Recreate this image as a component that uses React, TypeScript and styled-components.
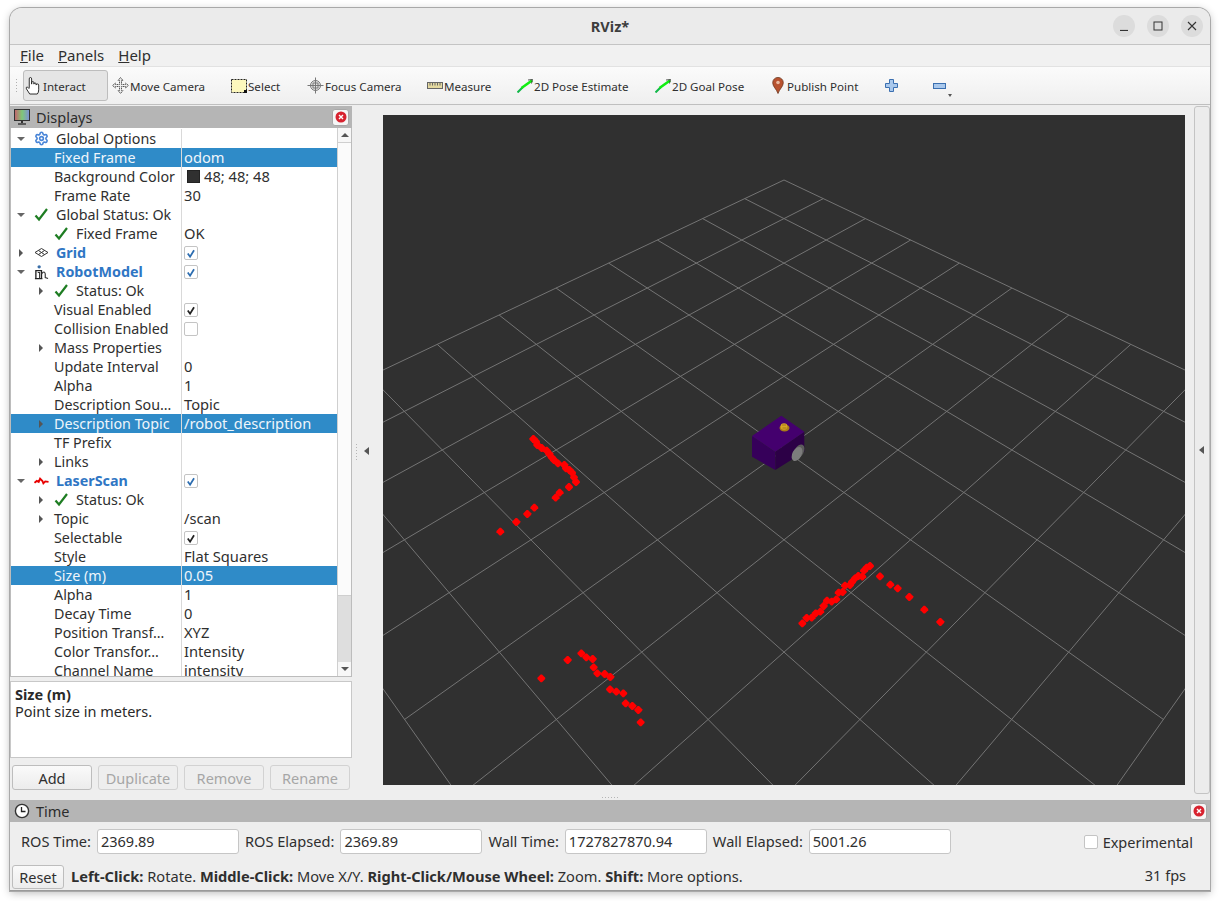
import React from 'react';
import styled, { createGlobalStyle } from 'styled-components';
import { Settings } from 'lucide-react';

const GlobalStyle = createGlobalStyle`
  html, body { margin: 0; padding: 0; background: #fff; }
  body {
    width: 1220px;
    height: 901px;
    overflow: hidden;
    font-family: 'Noto Sans', 'Open Sans', sans-serif;
    font-size: 14.5px;
    color: #2f2f2f;
  }
  * { box-sizing: border-box; }
`;

// ------------------------------------------------------------------------------------------------
// data

type RowData = {
  name: string;
  value?: string;
  level?: 0 | 1;
  arrow?: 'open' | 'closed';
  icon?: React.ReactNode;
  bold?: boolean;
  selected?: boolean;
  check?: 'blue' | 'black' | 'empty';
  swatch?: boolean;
};

const Check = () => (
  <svg width="15" height="15" viewBox="0 0 15 15">
    <path d="M1.5 8.5 L5 12.5 L13 2" fill="none" stroke="#1e7d22" strokeWidth="2.2" />
  </svg>
);

const GridIcon = () => (
  <svg width="15" height="15" viewBox="0 0 15 15" fill="none" stroke="#333" strokeWidth="1">
    <path d="M7.5 3.5 L14 7.5 L7.5 11.5 L1 7.5 Z" />
    <path d="M4.5 5.5 L10.5 9.5 M10.5 5.5 L4.5 9.5" />
  </svg>
);

const RobotIcon = () => (
  <svg width="16" height="16" viewBox="0 0 16 16" fill="none">
    <circle cx="5.5" cy="2.5" r="1.8" fill="#3a6ea8" />
    <path d="M2 15 V6.5 H8 V15 M1 15 H9" stroke="#222" strokeWidth="1.4" />
    <path d="M4 8.5 H6 V15 M8 10 Q11 6 12 10 L12 14 L15 15" stroke="#333" strokeWidth="1.2" />
  </svg>
);

const LaserIcon = () => (
  <svg width="16" height="15" viewBox="0 0 16 15" fill="none">
    <path d="M0.5 10 L3 8 L5 9 L6.5 5.5 L9 8 L10 10.5 L12 8.5 L15.5 9" stroke="#e80000" strokeWidth="2" />
  </svg>
);

const rows: RowData[] = [
  { name: 'Global Options', arrow: 'open', icon: <Settings size={15} color="#4a86d8" strokeWidth={2.6} /> },
  { name: 'Fixed Frame', value: 'odom', level: 1, selected: true },
  { name: 'Background Color', value: '48; 48; 48', level: 1, swatch: true },
  { name: 'Frame Rate', value: '30', level: 1 },
  { name: 'Global Status: Ok', arrow: 'open', icon: <Check /> },
  { name: 'Fixed Frame', value: 'OK', level: 1, icon: <Check /> },
  { name: 'Grid', arrow: 'closed', icon: <GridIcon />, bold: true, check: 'blue' },
  { name: 'RobotModel', arrow: 'open', icon: <RobotIcon />, bold: true, check: 'blue' },
  { name: 'Status: Ok', level: 1, arrow: 'closed', icon: <Check /> },
  { name: 'Visual Enabled', level: 1, check: 'black' },
  { name: 'Collision Enabled', level: 1, check: 'empty' },
  { name: 'Mass Properties', level: 1, arrow: 'closed' },
  { name: 'Update Interval', value: '0', level: 1 },
  { name: 'Alpha', value: '1', level: 1 },
  { name: 'Description Sou…', value: 'Topic', level: 1 },
  { name: 'Description Topic', value: '/robot_description', level: 1, arrow: 'closed', selected: true },
  { name: 'TF Prefix', level: 1 },
  { name: 'Links', level: 1, arrow: 'closed' },
  { name: 'LaserScan', arrow: 'open', icon: <LaserIcon />, bold: true, check: 'blue' },
  { name: 'Status: Ok', level: 1, arrow: 'closed', icon: <Check /> },
  { name: 'Topic', value: '/scan', level: 1, arrow: 'closed' },
  { name: 'Selectable', level: 1, check: 'black' },
  { name: 'Style', value: 'Flat Squares', level: 1 },
  { name: 'Size (m)', value: '0.05', level: 1, selected: true },
  { name: 'Alpha', value: '1', level: 1 },
  { name: 'Decay Time', value: '0', level: 1 },
  { name: 'Position Transf…', value: 'XYZ', level: 1 },
  { name: 'Color Transfor…', value: 'Intensity', level: 1 },
  { name: 'Channel Name', value: 'intensity', level: 1 },
];

const HandIcon = () => (
  <svg width="18" height="20" viewBox="0 0 18 20" fill="#fff" stroke="#222" strokeWidth="1">
    <path d="M4.5 12 V2.5 Q4.5 1 5.7 1 Q7 1 7 2.5 V8 V6.5 Q7 5.3 8.2 5.3 Q9.4 5.3 9.4 6.5 V8 Q9.4 6.8 10.6 6.8 Q11.8 6.8 11.8 8 V9 Q11.8 7.8 13 7.8 Q14.5 7.8 14.5 9 V14 Q14.5 17 13 18.5 H5 L1.5 13 Q0.8 11 2.5 11 L4.5 13" />
  </svg>
);

const MoveIcon = () => (
  <svg width="17" height="17" viewBox="0 0 17 17" fill="#eee" stroke="#555" strokeWidth="1">
    <path d="M8.5 0.5 L11 3.5 H9.5 V7.5 H13.5 V6 L16.5 8.5 L13.5 11 V9.5 H9.5 V13.5 H11 L8.5 16.5 L6 13.5 H7.5 V9.5 H3.5 V11 L0.5 8.5 L3.5 6 V7.5 H7.5 V3.5 H6 Z" strokeDasharray="1.5 0.6" />
  </svg>
);

const SelectIcon = () => (
  <svg width="16" height="14" viewBox="0 0 16 14">
    <rect x="0.5" y="0.5" width="15" height="13" fill="#fdf8bd" stroke="#222" strokeDasharray="2 1" />
    <rect x="13" y="11" width="3" height="3" fill="#111" />
  </svg>
);

const FocusIcon = () => (
  <svg width="17" height="17" viewBox="0 0 17 17" fill="none" stroke="#777" strokeWidth="1">
    <circle cx="8.5" cy="8.5" r="5" fill="#e6e6e6" />
    <path d="M8.5 0.5 V16.5 M0.5 8.5 H16.5 M6 6 H11 V11 H6 Z" />
  </svg>
);

const MeasureIcon = () => (
  <svg width="16" height="7" viewBox="0 0 16 7">
    <rect x="0.5" y="0.5" width="15" height="6" fill="#e4d9a0" stroke="#666" />
    <path d="M3 1 V3.5 M5.5 1 V3.5 M8 1 V3.5 M10.5 1 V3.5 M13 1 V3.5" stroke="#666" />
  </svg>
);

const PoseIcon = () => (
  <svg width="16" height="14" viewBox="0 0 16 14" fill="none">
    <path d="M0.5 13.5 L6 8" stroke="#12b84a" strokeWidth="2" />
    <path d="M4.5 9 L15 1.5" stroke="#12ee12" strokeWidth="2.6" />
    <path d="M11 1 L15.5 0.5 L14.5 4.5" stroke="#111" strokeWidth="0.7" />
  </svg>
);

const PinIcon = () => (
  <svg width="12" height="17" viewBox="0 0 12 17">
    <path d="M6 16.5 C4.5 12 0.7 9.5 0.7 5.7 A5.3 5.3 0 0 1 11.3 5.7 C11.3 9.5 7.5 12 6 16.5 Z" fill="#b8522f" stroke="#6e3a22" strokeWidth="0.8" />
    <circle cx="6" cy="5.5" r="1.8" fill="#e9b9a0" />
  </svg>
);

const PlusIcon = () => (
  <svg width="13" height="13" viewBox="0 0 13 13">
    <path d="M4.5 0.5 H8.5 V4.5 H12.5 V8.5 H8.5 V12.5 H4.5 V8.5 H0.5 V4.5 H4.5 Z" fill="#a9c8ec" stroke="#3b6fb0" />
  </svg>
);

const MinusIcon = () => (
  <svg width="13" height="6" viewBox="0 0 13 6">
    <rect x="0.5" y="0.5" width="12" height="5" fill="#a9c8ec" stroke="#3b6fb0" />
  </svg>
);

const MonitorIcon = () => (
  <svg width="16" height="16" viewBox="0 0 16 16">
    <defs>
      <linearGradient id="screen" x1="0" x2="1" y1="0" y2="0">
        <stop offset="0" stopColor="#c8606c" />
        <stop offset="0.5" stopColor="#7fc878" />
        <stop offset="1" stopColor="#7e8fd8" />
      </linearGradient>
    </defs>
    <rect x="0.5" y="0.5" width="15" height="11" fill="url(#screen)" stroke="#333" />
    <path d="M8 12 V14" stroke="#333" strokeWidth="2" />
    <path d="M4 15 H12" stroke="#333" strokeWidth="1.4" />
  </svg>
);

const ClockIcon = () => (
  <svg width="16" height="16" viewBox="0 0 16 16">
    <circle cx="8" cy="8" r="6.6" fill="#fff" stroke="#333" strokeWidth="1.4" />
    <path d="M7.5 4 V8.5 H11.5" fill="none" stroke="#222" strokeWidth="1.3" />
  </svg>
);

type Tool = { label?: string; width: number; icon: React.ReactNode; active?: boolean };

const tools: Tool[] = [
  { label: 'Interact', width: 85, icon: <HandIcon />, active: true },
  { label: 'Move Camera', width: 118, icon: <MoveIcon /> },
  { label: 'Select', width: 77, icon: <SelectIcon /> },
  { label: 'Focus Camera', width: 119, icon: <FocusIcon /> },
  { label: 'Measure', width: 90, icon: <MeasureIcon /> },
  { label: '2D Pose Estimate', width: 138, icon: <PoseIcon /> },
  { label: '2D Goal Pose', width: 115, icon: <PoseIcon /> },
  { label: 'Publish Point', width: 114, icon: <PinIcon /> },
  { width: 48, icon: <PlusIcon /> },
  { width: 19, icon: <MinusIcon /> },
];

// ------------------------------------------------------------------------------------------------
// 3d view, points read off the picture

const project = (a: number, b: number): [number, number] => {
  const w = 1 - 0.03328 * (a + b);
  return [784 + (38 * (a - b)) / w, (180 + 12.02 * (a + b)) / w];
};

const gridLines = Array.from({ length: 11 }, (_, i) => [
  [project(i, 0), project(i, 10)],
  [project(0, i), project(10, i)],
]).flat();

const scan = (ox: number, oy: number, pts: number[][]) => pts.map(([x, y]) => [ox + x / 3, oy + y / 3]);

const scanPoints = [
  ...scan(480, 420, [
    [160, 57], [168, 65], [172, 75], [185, 84], [200, 92], [208, 102], [215, 112], [222, 120], [234, 130], [253, 135],
    [258, 145], [268, 150], [276, 158], [282, 172], [288, 186], [267, 201], [239, 218], [227, 233], [163, 263],
    [142, 282], [109, 306], [61, 335],
  ]),
  ...scan(520, 640, [
    [184, 40], [199, 52], [218, 57], [143, 60], [221, 82], [232, 100], [254, 102], [271, 111], [64, 115], [270, 148],
    [289, 155], [310, 160], [317, 190], [337, 198], [355, 210], [362, 247],
  ]),
  ...scan(780, 550, [
    [67, 220], [80, 204], [95, 203], [107, 190], [121, 185], [131, 168], [141, 152], [155, 155], [169, 148], [176, 128],
    [188, 126], [195, 107], [210, 105], [216, 96], [225, 85], [235, 78], [247, 80], [252, 62], [260, 53], [270, 48],
    [300, 79], [331, 104], [353, 115], [388, 141], [433, 179], [481, 216],
  ]),
];

const dotPath = (x: number, y: number) =>
  `M${x - 0.7} ${y - 3.9} H${x + 0.7} L${x + 3.9} ${y - 0.7} V${y + 0.7} L${x + 0.7} ${y + 3.9} H${x - 0.7} L${x - 3.9} ${y + 0.7} V${y - 0.7} Z`;

const Scene = () => (
  <SceneSvg viewBox="383 115 802 670">
    {gridLines.map(([p, q], i) => (
      <line key={i} x1={p[0]} y1={p[1]} x2={q[0]} y2={q[1]} stroke="#747474" strokeWidth="1" />
    ))}
    {scanPoints.map(([x, y], i) => (
      <path key={i} d={dotPath(x, y)} fill="#ff0000" />
    ))}
    <g>
      <polygon points="752,436 775.3,451.7 775.3,470 752,456.7" fill="#36005a" />
      <polygon points="775.3,451.7 804.3,431.7 804.3,451.7 775.3,470" fill="#2c0046" />
      <polygon points="781.3,415.7 804.3,431.7 775.3,451.7 752,436" fill="#44006e" />
      <ellipse cx="784.5" cy="428" rx="5" ry="3.4" fill="#a97d16" />
      <ellipse cx="784" cy="426.5" rx="3.4" ry="3.2" fill="#d6a426" />
      <path d="M782 425 H786 M782.5 428 H786.5" stroke="#8f6a12" strokeWidth="0.7" />
      <ellipse cx="799" cy="451.5" rx="4.6" ry="7.6" transform="rotate(28 799 451.5)" fill="#5c5c5c" />
      <ellipse cx="797" cy="454" rx="4.6" ry="7.6" transform="rotate(28 797 454)" fill="#7c7c7c" />
    </g>
  </SceneSvg>
);

// ------------------------------------------------------------------------------------------------

const CloseButton = () => (
  <CloseBox>
    <svg width="12" height="12" viewBox="0 0 12 12">
      <circle cx="6" cy="6" r="5.5" fill="#d8222f" />
      <path d="M4 4 L8 8 M8 4 L4 8" stroke="#fff" strokeWidth="1.4" />
    </svg>
  </CloseBox>
);

const Caret: React.FC<{ open: boolean }> = ({ open }) => (
  <svg width="10" height="10" viewBox="0 0 10 10">
    {open ? <path d="M1 3 H9 L5 7 Z" fill="#666" /> : <path d="M3 1 L7 5 L3 9 Z" fill="#555" />}
  </svg>
);

const CheckBox: React.FC<{ state: 'blue' | 'black' | 'empty' }> = ({ state }) => (
  <CheckFrame>
    {state !== 'empty' && (
      <svg width="13" height="13" viewBox="0 0 13 13">
        <path d="M3 6.5 L5.5 10 L9.8 3" fill="none" stroke={state === 'blue' ? '#2b6cb0' : '#222'} strokeWidth="1.9" />
      </svg>
    )}
  </CheckFrame>
);

const TreeRow: React.FC<{ row: RowData }> = ({ row }) => (
  <Row $selected={row.selected}>
    <NameCell $level={row.level ?? 0}>
      <CaretSlot>{row.arrow && <Caret open={row.arrow === 'open'} />}</CaretSlot>
      {row.icon && <IconSlot>{row.icon}</IconSlot>}
      <NameText $bold={row.bold} $hasIcon={!!row.icon}>
        {row.name}
      </NameText>
    </NameCell>
    <ValueCell>
      {row.swatch && <Swatch />}
      {row.check && <CheckBox state={row.check} />}
      {row.value}
    </ValueCell>
  </Row>
);

export default function App() {
  return (
    <>
      <GlobalStyle />
      <Window>
        <TitleBar>
          <Title>RViz*</Title>
          <WindowButtons>
            <WindowButton>
              <svg width="10" height="10" viewBox="0 0 10 10"><path d="M1 9.5 H9" stroke="#333" strokeWidth="1.2" /></svg>
            </WindowButton>
            <WindowButton>
              <svg width="10" height="10" viewBox="0 0 10 10"><rect x="1" y="1" width="8" height="8" fill="none" stroke="#333" /></svg>
            </WindowButton>
            <WindowButton>
              <svg width="10" height="10" viewBox="0 0 10 10"><path d="M1 1 L9 9 M9 1 L1 9" stroke="#333" strokeWidth="1.1" /></svg>
            </WindowButton>
          </WindowButtons>
        </TitleBar>

        <MenuBar>
          <MenuItem><u>F</u>ile</MenuItem>
          <MenuItem><u>P</u>anels</MenuItem>
          <MenuItem><u>H</u>elp</MenuItem>
        </MenuBar>

        <ToolBar>
          <ToolHandle />
          {tools.map((tool, i) => (
            <ToolButton key={i} $width={tool.width} $active={tool.active}>
              <ToolIcon>{tool.icon}</ToolIcon>
              <ToolLabel>{tool.label}</ToolLabel>
            </ToolButton>
          ))}
          <MenuCaret />
        </ToolBar>

        <Middle>
          <LeftDock>
            <DockHeader>
              <MonitorIcon />
              <span>Displays</span>
              <CloseButton />
            </DockHeader>
            <TreeFrame>
              <Tree>
                {rows.map((row, i) => (
                  <TreeRow key={i} row={row} />
                ))}
              </Tree>
              <ScrollBar>
                <ScrollButton><ScrollUp /></ScrollButton>
                <ScrollThumb />
                <ScrollTrack />
                <ScrollButton><ScrollDown /></ScrollButton>
              </ScrollBar>
            </TreeFrame>
            <HSplit />
            <Description>
              <b>Size (m)</b>
              <div>Point size in meters.</div>
            </Description>
            <DockButtons>
              <PushButton>Add</PushButton>
              <PushButton disabled>Duplicate</PushButton>
              <PushButton disabled>Remove</PushButton>
              <PushButton disabled>Rename</PushButton>
            </DockButtons>
          </LeftDock>

          <LeftHandle>
            <GripDots />
            <HandleArrow />
          </LeftHandle>

          <ViewColumn>
            <Scene />
          </ViewColumn>

          <RightHandle>
            <HandleArrow />
          </RightHandle>
        </Middle>

        <BottomSplit>
          <GripDotsRow />
        </BottomSplit>

        <TimePanel>
          <TimeHeader>
            <ClockIcon />
            <span>Time</span>
            <CloseButton />
          </TimeHeader>
          <TimeRow>
            <TimeLabel>ROS Time:</TimeLabel>
            <TimeInput>2369.89</TimeInput>
            <TimeLabel>ROS Elapsed:</TimeLabel>
            <TimeInput>2369.89</TimeInput>
            <TimeLabel>Wall Time:</TimeLabel>
            <TimeInput>1727827870.94</TimeInput>
            <TimeLabel>Wall Elapsed:</TimeLabel>
            <TimeInput>5001.26</TimeInput>
            <Experimental>
              <CheckFrame />
              Experimental
            </Experimental>
          </TimeRow>
          <StatusRow>
            <ResetButton>Reset</ResetButton>
            <Hint>
              <b>Left-Click:</b> Rotate. <b>Middle-Click:</b> Move X/Y. <b>Right-Click/Mouse Wheel:</b> Zoom.{' '}
              <b>Shift:</b> More options.
            </Hint>
            <Fps>31 fps</Fps>
          </StatusRow>
        </TimePanel>
      </Window>
    </>
  );
}

// ------------------------------------------------------------------------------------------------

const Window = styled.div`
  margin: 8px 0 0 10px;
  width: 1200px;
  height: 883px;
  display: flex;
  flex-direction: column;
  position: relative;
  background: #eeeeee;
  border-radius: 12px 12px 0 0;
  box-shadow: 0 0 0 1px #a9a9a9, 0 2px 8px rgba(0, 0, 0, 0.28);
`;

const TitleBar = styled.div`
  height: 37px;
  flex: none;
  display: flex;
  align-items: center;
  justify-content: center;
  position: relative;
  background: #ebebeb;
  border-bottom: 1px solid #c4c4c4;
  border-radius: 12px 12px 0 0;
`;

const Title = styled.div`
  font-weight: 700;
  font-size: 14.5px;
  color: #3d3d3d;
`;

const WindowButtons = styled.div`
  position: absolute;
  right: 7px;
  top: 7px;
  display: flex;
  gap: 12px;
`;

const WindowButton = styled.div`
  width: 22px;
  height: 22px;
  border-radius: 50%;
  background: #dcdcdc;
  display: flex;
  align-items: center;
  justify-content: center;
`;

const MenuBar = styled.div`
  height: 22px;
  flex: none;
  display: flex;
  align-items: center;
  padding: 0 0 2px 10px;
  gap: 14px;
  background: #f1f1f1;
  border-bottom: 1px solid #e2e2e2;
`;

const MenuItem = styled.div`
  font-size: 15px;
  color: #2f2f2f;
`;

const ToolBar = styled.div`
  height: 38px;
  flex: none;
  display: flex;
  align-items: center;
  position: relative;
  padding-left: 13px;
  background: linear-gradient(#fbfbfb, #efefef);
  border-bottom: 1px solid #bfbfbf;
`;

const ToolHandle = styled.div`
  position: absolute;
  left: 5px;
  top: 11px;
  width: 4px;
  height: 16px;
  background-image: radial-gradient(#b0b0b0 0.7px, transparent 0.8px);
  background-size: 3px 3px;
`;

const ToolButton = styled.div<{ $width: number; $active?: boolean }>`
  width: ${p => p.$width}px;
  height: 31px;
  flex: none;
  display: flex;
  align-items: center;
  padding-left: 1px;
  margin-right: ${p => (p.$active ? 2 : 0)}px;
  white-space: nowrap;
  color: #2f2f2f;
  border: 1px solid ${p => (p.$active ? '#bdbdbd' : 'transparent')};
  border-radius: 3px;
  background: ${p => (p.$active ? '#e5e5e5' : 'transparent')};
`;

const ToolIcon = styled.span`
  width: 17px;
  flex: none;
  margin-right: 1px;
  display: flex;
  align-items: center;
  justify-content: center;
`;

const ToolLabel = styled.span`
  font-size: 11.6px;
  position: relative;
  top: 1px;
`;

const MenuCaret = styled.div`
  width: 0;
  height: 0;
  margin: 19px 0 0 0;
  border-left: 2.5px solid transparent;
  border-right: 2.5px solid transparent;
  border-top: 3px solid #555;
`;

const Middle = styled.div`
  flex: 1;
  min-height: 0;
  display: flex;
`;

const LeftDock = styled.div`
  width: 342px;
  flex: none;
  margin-top: 1px;
  display: flex;
  flex-direction: column;
`;

const DockHeader = styled.div`
  height: 22px;
  flex: none;
  display: flex;
  align-items: center;
  gap: 6px;
  padding: 0 3px 0 4px;
  background: #b5b5b5;
  color: #2c2c2c;

  span {
    flex: 1;
  }
`;

const CloseBox = styled.div`
  width: 17px;
  height: 17px;
  flex: none;
  display: flex;
  align-items: center;
  justify-content: center;
  background: #f6f6f6;
  border: 1px solid #a8a8a8;
  border-radius: 3px;
`;

const TreeFrame = styled.div`
  height: 549px;
  flex: none;
  display: flex;
  overflow: hidden;
  background: #fff;
  border: 1px solid #bcbcbc;
  border-top: none;
  border-right-color: #bcbcbc;
`;

const Tree = styled.div`
  width: 326px;
  flex: none;
  padding-top: 1px;
`;

const Row = styled.div<{ $selected?: boolean }>`
  height: 19px;
  display: flex;
  line-height: 19px;
  white-space: nowrap;
  background: ${p => (p.$selected ? '#2f8bc8' : 'transparent')};
  color: ${p => (p.$selected ? '#eef5fb' : '#2f2f2f')};
`;

const NameCell = styled.div<{ $level: number }>`
  width: 170px;
  flex: none;
  display: flex;
  align-items: center;
  overflow: hidden;
  font-size: 14.3px;
  padding-left: ${p => (p.$level === 1 ? 25 : 5)}px;
`;

const CaretSlot = styled.span`
  width: 10px;
  flex: none;
  margin-right: 8px;
  display: flex;
  align-items: center;
  justify-content: center;
`;

const IconSlot = styled.span`
  width: 15px;
  flex: none;
  display: flex;
  align-items: center;
  justify-content: center;
`;

const NameText = styled.span<{ $bold?: boolean; $hasIcon?: boolean }>`
  margin-left: ${p => (p.$hasIcon ? 7 : 0)}px;
  font-weight: ${p => (p.$bold ? 700 : 400)};
  color: ${p => (p.$bold ? '#2f76c4' : 'inherit')};
`;

const ValueCell = styled.div`
  flex: 1;
  display: flex;
  align-items: center;
  padding-left: 2px;
  font-size: 14.7px;
  border-left: 1px solid #d9d9d9;
`;

const Swatch = styled.span`
  width: 13px;
  height: 13px;
  margin: 0 4px 0 3px;
  background: #303030;
  border: 1px solid #222;
`;

const CheckFrame = styled.span`
  width: 14px;
  height: 14px;
  flex: none;
  display: inline-flex;
  background: #fff;
  border: 1px solid #c4c4c4;
  border-radius: 2px;
`;

const ScrollBar = styled.div`
  width: 14px;
  flex: none;
  display: flex;
  flex-direction: column;
  border-left: 1px solid #cfcfcf;
  background: #dddddd;
`;

const ScrollButton = styled.div`
  height: 14px;
  flex: none;
  display: flex;
  align-items: center;
  justify-content: center;
  background: #f7f7f7;
`;

const ScrollUp = styled.span`
  border-left: 4px solid transparent;
  border-right: 4px solid transparent;
  border-bottom: 4px solid #555;
`;

const ScrollDown = styled.span`
  border-left: 4px solid transparent;
  border-right: 4px solid transparent;
  border-top: 4px solid #555;
`;

const ScrollThumb = styled.div`
  height: 454px;
  flex: none;
  background: #fbfbfb;
  border-top: 1px solid #cfcfcf;
  border-bottom: 1px solid #cfcfcf;
`;

const ScrollTrack = styled.div`
  flex: 1;
  background: #dedede;
`;

const HSplit = styled.div`
  height: 4px;
  flex: none;
`;

const Description = styled.div`
  height: 77px;
  flex: none;
  padding: 4px 4px;
  background: #fff;
  border: 1px solid #c8c8c8;
  line-height: 17px;
  color: #2a2a2a;
`;

const DockButtons = styled.div`
  margin-top: 7px;
  padding: 0 2px;
  display: flex;
  gap: 6px;
`;

const PushButton = styled.button`
  width: 80px;
  height: 25px;
  padding: 0;
  font: inherit;
  color: #2f2f2f;
  background: linear-gradient(#fafafa, #ececec);
  border: 1px solid #bdbdbd;
  border-radius: 3px;

  &:disabled {
    color: #a6a6a6;
    background: #eeeeee;
    border-color: #d2d2d2;
  }
`;

const LeftHandle = styled.div`
  width: 31px;
  flex: none;
  display: flex;
  align-items: center;
  justify-content: center;
  position: relative;
  padding: 2px 2px 0 0;
`;

const GripDots = styled.div`
  position: absolute;
  left: 3px;
  top: 338px;
  width: 3px;
  height: 18px;
  background-image: radial-gradient(#b5b5b5 0.7px, transparent 0.8px);
  background-size: 3px 3px;
`;

const GripDotsRow = styled.div`
  width: 18px;
  height: 3px;
  background-image: radial-gradient(#b5b5b5 0.7px, transparent 0.8px);
  background-size: 3px 3px;
`;

const HandleArrow = styled.span`
  border-top: 4px solid transparent;
  border-bottom: 4px solid transparent;
  border-right: 5px solid #555;
`;

const ViewColumn = styled.div`
  width: 802px;
  flex: none;
  padding-top: 10px;
`;

const SceneSvg = styled.svg`
  display: block;
  width: 802px;
  height: 670px;
  background: #303030;
`;

const RightHandle = styled.div`
  width: 16px;
  flex: none;
  margin: 1px 0 0 9px;
  padding-right: 1px;
  display: flex;
  align-items: center;
  justify-content: center;
  background: #ececec;
  border: 1px solid #c4c4c4;
  border-radius: 3px;
`;

const BottomSplit = styled.div`
  height: 6px;
  flex: none;
  display: flex;
  align-items: center;
  justify-content: center;
`;

const TimePanel = styled.div`
  height: 91px;
  flex: none;
  display: flex;
  flex-direction: column;
  border-bottom: 1px solid #9a9a9a;
`;

const TimeHeader = styled.div`
  height: 22px;
  flex: none;
  display: flex;
  align-items: center;
  gap: 6px;
  padding: 0 3px 0 4px;
  background: #b5b5b5;
  color: #2c2c2c;

  span {
    flex: 1;
  }
`;

const TimeRow = styled.div`
  height: 25px;
  margin-top: 7px;
  padding-left: 5px;
  display: flex;
  align-items: center;
  flex: none;
`;

const TimeLabel = styled.div`
  flex: none;
  margin: 0 6px;
  padding-bottom: 2px;
  font-size: 14.6px;
  white-space: nowrap;
`;

const TimeInput = styled.div`
  width: 142px;
  height: 25px;
  flex: none;
  padding: 1px 3px;
  line-height: 20px;
  background: #fff;
  border: 1px solid #c6c6c6;
  border-radius: 3px;
`;

const Experimental = styled.label`
  margin-left: auto;
  margin-right: 17px;
  display: flex;
  align-items: center;
  gap: 5px;
`;

const StatusRow = styled.div`
  height: 24px;
  margin-top: 11px;
  padding: 0 24px 0 2px;
  display: flex;
  align-items: center;
  flex: none;
`;

const ResetButton = styled.button`
  width: 52px;
  height: 24px;
  padding: 0;
  font: inherit;
  color: #2f2f2f;
  background: linear-gradient(#fafafa, #ececec);
  border: 1px solid #bdbdbd;
  border-radius: 3px;
`;

const Hint = styled.div`
  flex: 1;
  margin-left: 7px;
  padding-bottom: 2px;
  font-size: 14.63px;
  white-space: nowrap;
`;

const Fps = styled.div`
  padding-bottom: 4px;
`;
